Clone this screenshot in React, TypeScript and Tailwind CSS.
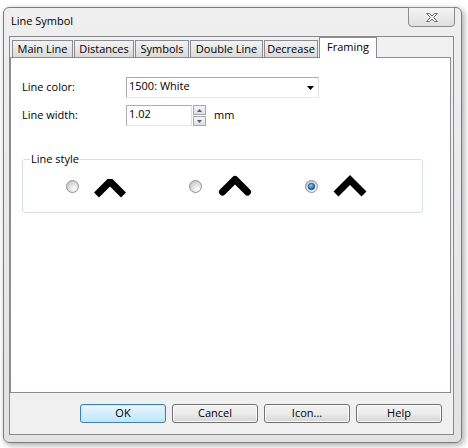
import React from 'react';

const tabs = [
  { label: 'Main Line', w: 'w-[61px]' },
  { label: 'Distances', w: 'w-[60px]' },
  { label: 'Symbols', w: 'w-[54px]' },
  { label: 'Double Line', w: 'w-[73px]' },
  { label: 'Decrease', w: 'w-[54px]' },
];

const Radio: React.FC<{ checked?: boolean; id: string }> = ({ checked, id }) => (
  <svg width="13" height="13" viewBox="0 0 13 13" className="shrink-0">
    <defs>
      <radialGradient id={`rb-${id}`} cx="0.65" cy="0.7" r="0.7">
        <stop offset="0" stopColor="#ffffff" />
        <stop offset="1" stopColor="#c9c9c9" />
      </radialGradient>
      <radialGradient id={`rd-${id}`} cx="0.4" cy="0.35" r="0.7">
        <stop offset="0" stopColor="#8fd3ff" />
        <stop offset="0.5" stopColor="#2b8fd6" />
        <stop offset="1" stopColor="#0b4c86" />
      </radialGradient>
    </defs>
    <circle cx="6.5" cy="6.5" r="6" fill={`url(#rb-${id})`} stroke="#949494" />
    {checked && <circle cx="6.5" cy="6.5" r="3.3" fill={`url(#rd-${id})`} stroke="#17416b" strokeWidth="0.6" />}
  </svg>
);

// three corner styles for the framing: bevel, round, miter
const Chevron: React.FC<{ kind: 'bevel' | 'round' | 'miter' }> = ({ kind }) => {
  const pts =
    kind === 'bevel'
      ? '3.5,21 17,7.5 30.5,21'
      : kind === 'round'
      ? '4.5,18 17,5.5 29.5,18'
      : '3,20 17,6 31,20';
  return (
    <svg width="34" height="24" viewBox="0 0 34 24" className="shrink-0">
      <polyline
        points={pts}
        fill="none"
        stroke="#000"
        strokeWidth="7"
        strokeLinejoin={kind}
        strokeLinecap={kind === 'round' ? 'round' : 'butt'}
      />
    </svg>
  );
};

const Button: React.FC<{ label: string; primary?: boolean }> = ({ label, primary }) => (
  <div
    className={`w-[86px] h-[19px] flex items-center justify-center rounded-[3px] border ${
      primary
        ? 'border-[#3c7fb1] bg-gradient-to-b from-[#eaf6fd] to-[#bee6fd] shadow-[inset_0_0_0_1px_#c5e8fb]'
        : 'border-[#707070] bg-gradient-to-b from-[#f2f2f2] via-[#ebebeb] to-[#d6d6d6] shadow-[inset_0_0_0_1px_#fcfcfc]'
    }`}
  >
    {label}
  </div>
);

export default function App() {
  return (
    <div className="w-[468px] h-[448px] bg-white pt-[7px] pl-[3px] text-[11px] text-black font-['Open_Sans',sans-serif]">
      <div className="w-[459px] h-[436px] rounded-[6px] border border-[#7c7c7c] bg-gradient-to-b from-[#efefef] to-[#e2e2e2] shadow-[2px_2px_6px_rgba(0,0,0,0.35)] flex flex-col">
        {/* title bar */}
        <div className="h-[28px] flex items-start shrink-0">
          <span className="ml-[7px] mt-[5px] leading-[16px]">Line Symbol</span>
          <div className="ml-auto mr-[6px] -mt-[1px] w-[47px] h-[20px] rounded-b-[4px] border border-[#8c8c8c] bg-gradient-to-b from-[#f4f4f4] to-[#e0e0e0] flex items-center justify-center">
            <svg width="14" height="11" viewBox="0 0 14 11">
              <path
                d="M1.5 1.5 H4.5 L7 4 L9.5 1.5 H12.5 L8.5 5.5 L12.5 9.5 H9.5 L7 7 L4.5 9.5 H1.5 L5.5 5.5 Z"
                fill="#f7f7f7"
                stroke="#6e6e6e"
                strokeWidth="1"
                strokeLinejoin="round"
              />
            </svg>
          </div>
        </div>

        {/* client area */}
        <div className="ml-[5px] w-[445px] h-[399px] border border-[#8a8a8a] bg-[#f0f0f0] flex flex-col">
          {/* tab strip */}
          <div className="h-[20px] flex items-end gap-[1px] pl-[2px] shrink-0">
            {tabs.map((t) => (
              <div
                key={t.label}
                className={`${t.w} h-[17px] border border-b-0 border-[#898c95] bg-gradient-to-b from-[#f3f3f3] to-[#dadada] flex items-center justify-center leading-[14px]`}
              >
                {t.label}
              </div>
            ))}
            <div className="w-[58px] h-[21px] -mb-[1px] relative z-10 border border-b-0 border-[#898c95] bg-white flex items-start justify-center pt-[2px] leading-[14px]">
              Framing
            </div>
          </div>

          {/* tab page */}
          <div className="w-[441px] h-[336px] border border-[#898c95] bg-white pl-[11px] pt-[19px] flex flex-col">
            <div className="flex items-center h-[21px]">
              <span className="w-[104px]">Line color:</span>
              <div className="w-[193px] h-[21px] border border-[#abadb3] border-b-[#e3e9ef] border-r-[#dbdfe6] bg-white flex items-center pl-[2px] pr-[4px]">
                <span className="flex-1 -mt-[2px]">1500: White</span>
                <svg width="7" height="4" viewBox="0 0 7 4">
                  <polygon points="0,0 7,0 3.5,4" fill="#000" />
                </svg>
              </div>
            </div>

            <div className="flex items-center h-[21px] mt-[7px]">
              <span className="w-[104px]">Line width:</span>
              <div className="w-[66px] h-[21px] border border-[#abadb3] border-b-[#e3e9ef] border-r-[#dbdfe6] bg-white flex items-center pl-[2px]">
                <span className="-mt-[2px]">1.02</span>
              </div>
              <div className="ml-[1px] flex flex-col gap-[1px]">
                {[0, 1].map((i) => (
                  <div
                    key={i}
                    className="w-[13px] h-[10px] border border-[#a7a7a7] bg-gradient-to-b from-[#f6f6f6] to-[#dedede] flex items-center justify-center"
                  >
                    <svg width="5" height="3" viewBox="0 0 5 3">
                      <polygon points={i === 0 ? '0,3 5,3 2.5,0' : '0,0 5,0 2.5,3'} fill="#4d5f80" />
                    </svg>
                  </div>
                ))}
              </div>
              <span className="ml-[8px]">mm</span>
            </div>

            {/* line style group */}
            <div className="relative mt-[33px] w-[401px] h-[54px] rounded-[3px] border border-[#d5dfe5] flex items-center">
              <span className="absolute left-[7px] -top-[9px] bg-white px-[1px] leading-[16px]">Line style</span>
              <div className="ml-[43px]">
                <Radio id="a" />
              </div>
              <div className="ml-[14px]">
                <Chevron kind="bevel" />
              </div>
              <div className="ml-[62px]">
                <Radio id="b" />
              </div>
              <div className="ml-[16px]">
                <Chevron kind="round" />
              </div>
              <div className="ml-[53px]">
                <Radio id="c" checked />
              </div>
              <div className="ml-[15px]">
                <Chevron kind="miter" />
              </div>
            </div>
          </div>

          {/* dialog buttons */}
          <div className="mt-[11px] flex justify-end gap-[6px] pr-[11px]">
            <Button label="OK" primary />
            <Button label="Cancel" />
            <Button label="Icon..." />
            <Button label="Help" />
          </div>
        </div>
      </div>
    </div>
  );
}
